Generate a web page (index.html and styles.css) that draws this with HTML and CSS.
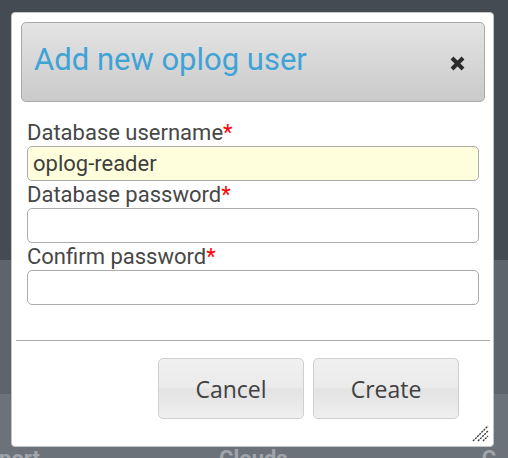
FILE: index.html
```html
<!DOCTYPE html>
<html>
<head>
<meta charset="utf-8">
<link rel="stylesheet" href="styles.css">
</head>
<body>
<div class="page">
  <div class="band band-top"></div>
  <div class="band band-mid"></div>
  <div class="band band-bottom">
    <span class="nav-item nav-support">port</span>
    <span class="nav-item nav-clouds">Clouds</span>
    <span class="nav-item nav-c">C</span>
  </div>
</div>

<div class="dialog">
  <div class="dialog-header">
    <h1 class="dialog-title">Add new oplog user</h1>
    <svg class="close-icon" width="15" height="15" viewBox="0 0 15 15">
      <path d="M2 2 L13 13 M13 2 L2 13" stroke="#2b2b2b" stroke-width="4" stroke-linecap="butt" fill="none"/>
    </svg>
  </div>
  <form class="dialog-form">
    <label class="field-label">Database username<span class="req">*</span></label>
    <input class="field-input filled" type="text" value="oplog-reader">
    <label class="field-label">Database password<span class="req">*</span></label>
    <input class="field-input" type="password">
    <label class="field-label">Confirm password<span class="req">*</span></label>
    <input class="field-input" type="password">
  </form>
  <div class="separator"></div>
  <div class="actions">
    <button class="btn" type="button">Cancel</button>
    <button class="btn" type="button">Create</button>
  </div>
  <svg class="grip" width="17" height="17" viewBox="0 0 17 17">
    <path d="M1 16 L16 1 M6 16 L16 6 M11 16 L16 11" stroke="#3a3a3a" stroke-width="1.4" stroke-dasharray="2 1" fill="none"/>
  </svg>
</div>
</body>
</html>
```

FILE: styles.css
```css
* { box-sizing: border-box; }

html, body {
  margin: 0;
  padding: 0;
  width: 508px;
  height: 458px;
  overflow: hidden;
}

body {
  font-family: Roboto, "Liberation Sans", sans-serif;
  background: #6c7279;
}

.page {
  display: flex;
  flex-direction: column;
  height: 458px;
}

.band { flex-shrink: 0; }
.band-top { height: 260px; background: #454b53; }
.band-mid { height: 134px; background: #5e646c; }
.band-bottom {
  flex: 1 0 auto;
  background: #6c7279;
  display: flex;
  padding-top: 52px;
  font-weight: 700;
  font-size: 22px;
  line-height: 26px;
  color: #a0a5ab;
  white-space: nowrap;
}
.nav-support { margin-left: -1px; width: 36px; }
.nav-clouds { margin-left: 184px; }
.nav-c { margin-left: 194px; }

.dialog {
  position: absolute;
  left: 11px;
  top: 12px;
  width: 483px;
  height: 435px;
  background: #fff;
  border: 1px solid #c4c4c4;
  border-radius: 4px;
  display: flex;
  flex-direction: column;
}

.dialog-header {
  margin: 9px 8px 0 9px;
  height: 80px;
  border: 1px solid #a9a9a9;
  border-radius: 5px;
  background: linear-gradient(#e4e4e4, #cacaca);
  display: flex;
  align-items: center;
  justify-content: space-between;
  padding: 0 19px 5px 12px;
  flex-shrink: 0;
}

.dialog-title {
  margin: 0;
  font-weight: 400;
  font-size: 31px;
  line-height: 36px;
  color: #3fa3d6;
}

.close-icon { margin-top: 7px; }

.dialog-form {
  display: flex;
  flex-direction: column;
  margin: 17px 14px 0 15px;
}

.field-label {
  font-size: 22px;
  line-height: 27px;
  color: #474747;
}

.req { color: #f00; }

.field-input {
  height: 35px;
  border: 1px solid #ababab;
  border-radius: 5px;
  padding: 0 5px;
  font-family: Roboto, "Liberation Sans", sans-serif;
  font-size: 22px;
  color: #3e3e3e;
  background: #fff;
  outline: none;
}

.field-input.filled { background: #fefedc; }

.separator {
  margin: 35px 3px 0 4px;
  height: 1px;
  background: #aaaaaa;
  flex-shrink: 0;
}

.actions {
  display: flex;
  justify-content: flex-end;
  gap: 9px;
  margin: 17px 34px 0 0;
}

.btn {
  width: 146px;
  height: 61px;
  flex-shrink: 0;
  border: 1px solid #cfcfcf;
  border-radius: 5px;
  background: linear-gradient(#f0f0f0 0%, #ebebeb 48%, #e3e3e3 52%, #efefef 100%);
  font-family: "Open Sans", "DejaVu Sans", sans-serif;
  font-size: 23px;
  color: #404040;
  padding: 0;
}

.grip {
  position: absolute;
  right: 4px;
  bottom: 4px;
}
```
